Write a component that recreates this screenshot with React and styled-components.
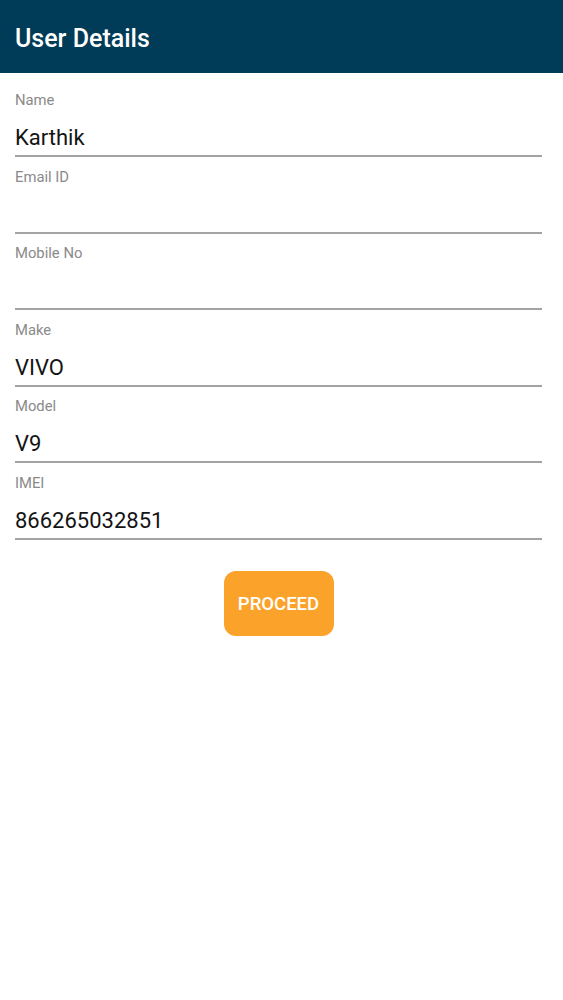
import React from "react";
import styled, { createGlobalStyle } from "styled-components";

const GlobalStyle = createGlobalStyle`
  html, body {
    margin: 0;
    padding: 0;
    background: #ffffff;
    font-family: Roboto, "Liberation Sans", sans-serif;
  }
`;

const Page = styled.div`
  min-height: 1000px;
  background: #ffffff;
`;

const Header = styled.header`
  height: 73px;
  background: #003b57;
  display: flex;
  align-items: center;
  padding: 0 15px;
  box-sizing: border-box;

  h1 {
    margin: 3px 0 0;
    color: #ffffff;
    font-size: 25px;
    font-weight: 500;
  }
`;

const Form = styled.div`
  display: flex;
  flex-direction: column;
  padding: 7.5px 21px 0 15px;
`;

const Field = styled.div`
  display: flex;
  flex-direction: column;
  padding-top: 11.6px;
  border-bottom: 2px solid #a3a3a3;

  .label {
    font-size: 14.8px;
    line-height: 16px;
    color: #8a8a8a;
  }

  .value {
    margin-top: 15px;
    height: 32px;
    font-size: 22px;
    line-height: 30px;
    color: #141414;
  }
`;

const Button = styled.button`
  align-self: center;
  margin-top: 31px;
  width: 110px;
  height: 65px;
  border: none;
  border-radius: 12px;
  background: #fba22b;
  color: #ffffff;
  font-family: Roboto, "Liberation Sans", sans-serif;
  font-size: 18.5px;
  font-weight: 500;
  cursor: pointer;
`;

const fields = [
  { label: "Name", value: "Karthik" },
  { label: "Email ID", value: "" },
  { label: "Mobile No", value: "" },
  { label: "Make", value: "VIVO" },
  { label: "Model", value: "V9" },
  { label: "IMEI", value: "866265032851" },
];

function App() {
  return (
    <Page>
      <GlobalStyle />
      <Header>
        <h1>User Details</h1>
      </Header>
      <Form>
        {fields.map((f) => (
          <Field key={f.label}>
            <div className="label">{f.label}</div>
            <div className="value">{f.value}</div>
          </Field>
        ))}
        <Button>PROCEED</Button>
      </Form>
    </Page>
  );
}

export default App;
